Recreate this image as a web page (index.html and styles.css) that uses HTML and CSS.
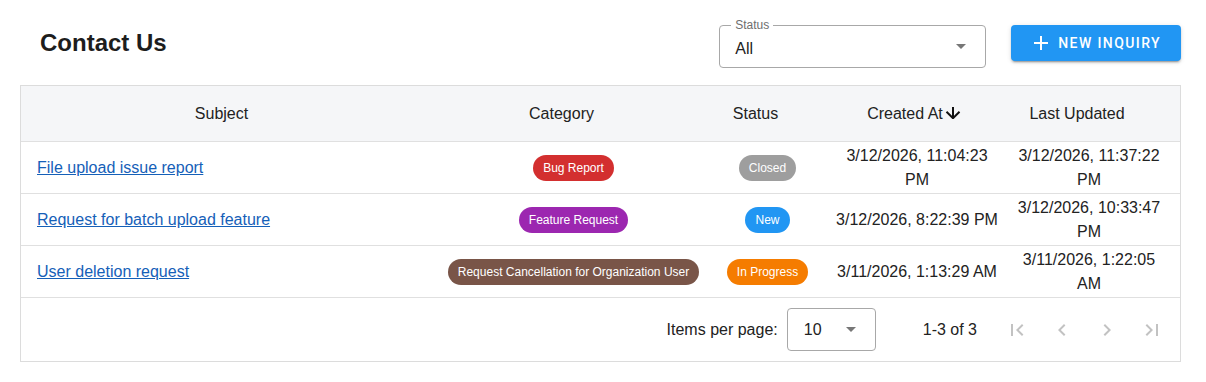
FILE: index.html
```html
<!DOCTYPE html>
<html lang="en">
<head>
    <meta charset="UTF-8">
    <meta name="viewport" content="width=device-width, initial-scale=1.0" />
    <title>Contact Us</title>
    <link rel="stylesheet" href="styles.css">
</head>
<body>
    <div class="page">
        <div class="toolbar">
            <h1 class="title">Contact Us</h1>
            <div class="status-field">
                <span class="field-label">Status</span>
                <span class="field-value">All</span>
                <span class="caret"></span>
            </div>
            <button type="button" class="btn-new">
                <svg width="24" height="24" viewBox="0 0 24 24"><path d="M19 13h-6v6h-2v-6H5v-2h6V5h2v6h6v2z" fill="#fff"/></svg>
                New Inquiry
            </button>
        </div>

        <div class="card">
            <table class="inquiries">
                <colgroup>
                    <col class="col-subject">
                    <col class="col-category">
                    <col class="col-status">
                    <col class="col-created">
                    <col class="col-updated">
                </colgroup>
                <thead>
                    <tr>
                        <th class="cell-subject">Subject<span class="sort"></span></th>
                        <th>Category<span class="sort"></span></th>
                        <th>Status<span class="sort"></span></th>
                        <th>Created At<span class="sort active"><svg width="16" height="12" viewBox="0 0 16 12"><path d="M8 0V11M1.5 4.8L8 11.2L14.5 4.8" fill="none" stroke="#111" stroke-width="2"/></svg></span></th>
                        <th class="cell-updated">Last Updated<span class="sort"></span></th>
                    </tr>
                </thead>
                <tbody>
                    <tr>
                        <td class="cell-subject"><a href="#">File upload issue report</a></td>
                        <td><span class="chip chip-bug">Bug Report</span></td>
                        <td><span class="chip chip-closed">Closed</span></td>
                        <td>3/12/2026, 11:04:23 PM</td>
                        <td class="cell-updated">3/12/2026, 11:37:22 PM</td>
                    </tr>
                    <tr>
                        <td class="cell-subject"><a href="#">Request for batch upload feature</a></td>
                        <td><span class="chip chip-feature">Feature Request</span></td>
                        <td><span class="chip chip-new">New</span></td>
                        <td>3/12/2026, 8:22:39 PM</td>
                        <td class="cell-updated">3/12/2026, 10:33:47 PM</td>
                    </tr>
                    <tr>
                        <td class="cell-subject"><a href="#">User deletion request</a></td>
                        <td><span class="chip chip-cancel">Request Cancellation for Organization User</span></td>
                        <td><span class="chip chip-progress">In Progress</span></td>
                        <td>3/11/2026, 1:13:29 AM</td>
                        <td class="cell-updated">3/11/2026, 1:22:05 AM</td>
                    </tr>
                </tbody>
            </table>

            <div class="paginator">
                <span class="page-size-label">Items per page:</span>
                <div class="page-size">
                    <span>10</span>
                    <span class="caret"></span>
                </div>
                <span class="range">1-3 of 3</span>
                <button type="button" class="page-btn" disabled>
                    <svg width="24" height="24" viewBox="0 0 24 24"><path d="M18.41 16.59L13.82 12l4.59-4.59L17 6l-6 6 6 6zM6 6h2v12H6z"/></svg>
                </button>
                <button type="button" class="page-btn" disabled>
                    <svg width="24" height="24" viewBox="0 0 24 24"><path d="M15.41 7.41L14 6l-6 6 6 6 1.41-1.41L10.83 12z"/></svg>
                </button>
                <button type="button" class="page-btn" disabled>
                    <svg width="24" height="24" viewBox="0 0 24 24"><path d="M10 6L8.59 7.41 13.17 12l-4.58 4.59L10 18l6-6z"/></svg>
                </button>
                <button type="button" class="page-btn" disabled>
                    <svg width="24" height="24" viewBox="0 0 24 24"><path d="M5.59 7.41L10.18 12l-4.59 4.59L7 18l6-6-6-6zM16 6h2v12h-2z"/></svg>
                </button>
            </div>
        </div>
    </div>
</body>
</html>
```

FILE: styles.css
```css
* {
    box-sizing: border-box;
    margin: 0;
    padding: 0;
}

body {
    font-family: 'Liberation Sans', Arial, sans-serif;
    color: #212121;
    background: #fff;
}

.page {
    padding: 0 25px 0 20px;
}

.toolbar {
    display: flex;
    align-items: flex-start;
    height: 85px;
    padding-top: 25px;
}

.title {
    flex: 1;
    margin-left: 20px;
    font-size: 24px;
    line-height: 36px;
    font-weight: bold;
    color: #1d1d1d;
}

.status-field {
    position: relative;
    display: flex;
    align-items: center;
    justify-content: space-between;
    width: 267px;
    height: 43px;
    padding: 0 19px 0 15px;
    border: 1px solid #a8a8a8;
    border-radius: 4px;
}

.field-label {
    position: absolute;
    top: -8px;
    left: 11px;
    padding: 0 4px;
    background: #fff;
    font-size: 12px;
    line-height: 14px;
    color: #6e6e6e;
}

.field-value {
    padding-top: 4px;
    font-size: 16px;
    color: #222;
}

.caret {
    width: 0;
    height: 0;
    border-left: 5px solid transparent;
    border-right: 5px solid transparent;
    border-top: 5px solid #777;
}

.btn-new {
    display: flex;
    align-items: center;
    height: 36px;
    margin-left: 25px;
    padding: 0 20px 0 18px;
    border: none;
    border-radius: 4px;
    background: #2196f3;
    color: #fff;
    font-family: Roboto, 'Liberation Sans', sans-serif;
    font-size: 14px;
    font-weight: 500;
    letter-spacing: 1.4px;
    text-transform: uppercase;
    box-shadow: 0 3px 1px -2px rgba(0, 0, 0, 0.2), 0 2px 2px 0 rgba(0, 0, 0, 0.14), 0 1px 5px 0 rgba(0, 0, 0, 0.12);
}

.btn-new svg {
    margin-right: 5px;
}

.card {
    border: 1px solid #dcdcdc;
}

.inquiries {
    width: 100%;
    table-layout: fixed;
    border-collapse: separate;
    border-spacing: 0;
    font-size: 16px;
    line-height: 24px;
}

.col-subject { width: 417px; }
.col-category { width: 271px; }
.col-status { width: 117px; }
.col-created { width: 182px; }
.col-updated { width: 172px; }

.inquiries th,
.inquiries td {
    padding: 0 8px;
    text-align: center;
    vertical-align: middle;
    border-bottom: 1px solid #e0e0e0;
    color: #222;
}

.inquiries th {
    height: 56px;
    font-weight: normal;
    background: #f5f6f8;
}

.inquiries td {
    height: 52px;
}

.inquiries .cell-subject {
    padding-left: 16px;
}

.inquiries td.cell-subject {
    text-align: left;
}

.inquiries .cell-updated {
    padding-right: 18px;
}

.sort {
    display: inline-block;
    width: 22px;
    height: 12px;
    margin-left: 2px;
    visibility: hidden;
}

.sort.active {
    visibility: visible;
}

.sort svg {
    display: block;
}

.inquiries a {
    color: #1560b8;
}

.chip {
    display: inline-block;
    padding: 4px 10px;
    border-radius: 13px;
    font-size: 12px;
    line-height: 18px;
    color: #fff;
    white-space: nowrap;
}

.chip-bug { background: #d32f2f; }
.chip-feature { background: #9c27b0; }
.chip-cancel { background: #795548; }
.chip-closed { background: #9e9e9e; }
.chip-new { background: #2196f3; }
.chip-progress { background: #f57c00; }

.paginator {
    display: flex;
    align-items: center;
    justify-content: flex-end;
    height: 63px;
    padding-right: 8px;
    font-size: 16px;
    color: #222;
}

.page-size {
    display: flex;
    align-items: center;
    justify-content: space-between;
    width: 89px;
    height: 43px;
    margin-left: 9px;
    padding: 0 19px 0 16px;
    border: 1px solid #a8a8a8;
    border-radius: 4px;
}

.range {
    margin: 0 20px 0 47px;
}

.page-btn {
    display: flex;
    align-items: center;
    justify-content: center;
    width: 40px;
    height: 40px;
    margin-left: 5px;
    border: none;
    background: none;
}

.page-btn:first-of-type {
    margin-left: 0;
}

.page-btn svg {
    fill: #c2c2c2;
}
```
